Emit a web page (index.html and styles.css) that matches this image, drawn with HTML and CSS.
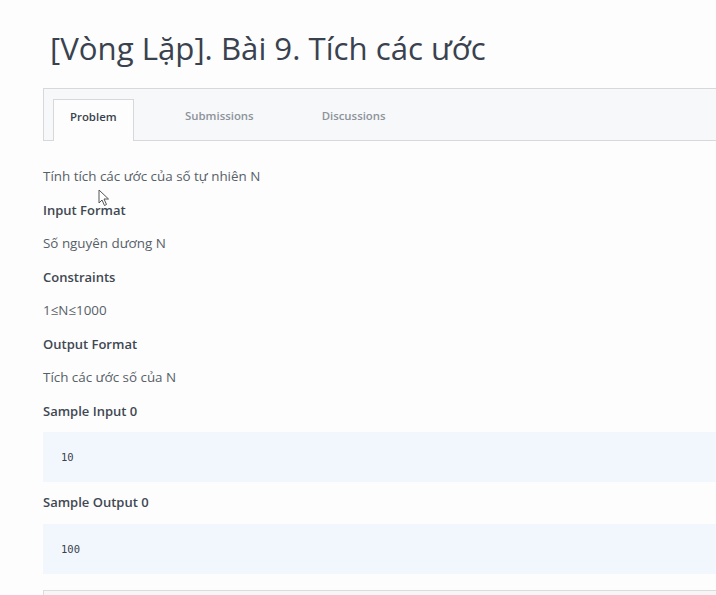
FILE: index.html
```html
<!DOCTYPE html>
<html lang="vi">
<head>
<meta charset="utf-8">
<link rel="stylesheet" href="styles.css">
</head>
<body>
<div class="page">
  <h1 class="title">[Vòng Lặp]. Bài 9. Tích các ước</h1>
  <div class="tabs">
    <div class="tab active">Problem</div>
    <div class="tab">Submissions</div>
    <div class="tab">Discussions</div>
  </div>
  <div class="content">
    <p class="text">Tính tích các ước của số tự nhiên N</p>
    <p class="heading">Input Format</p>
    <p class="text">Số nguyên dương N</p>
    <p class="heading">Constraints</p>
    <p class="text">1≤N≤1000</p>
    <p class="heading">Output Format</p>
    <p class="text">Tích các ước số của N</p>
    <p class="heading">Sample Input 0</p>
    <pre class="code">10</pre>
    <p class="heading">Sample Output 0</p>
    <pre class="code">100</pre>
    <div class="panel"></div>
  </div>
  <svg class="cursor" width="12" height="18" viewBox="0 0 12 18"><path d="M1 1 L1 14 L4 11 L6.5 16.5 L8.5 15.5 L6 10 L10.5 10 Z" fill="#fff" stroke="#555" stroke-width="1"/></svg>
</div>
</body>
</html>
```
FILE: styles.css
```css
html, body {
  margin: 0;
  padding: 0;
  background: #fdfdfd;
}
body {
  font-family: "Open Sans", "Liberation Sans", sans-serif;
  color: #39424e;
  overflow: hidden;
}
.page {
  position: relative;
  padding-left: 43px;
}
.title {
  margin: 0;
  padding: 26px 0 0 7px;
  font-size: 31.2px;
  font-weight: 400;
  line-height: 44px;
  color: #39424e;
  letter-spacing: 0;
}
.tabs {
  margin-top: 18px;
  height: 51px;
  border: 1px solid #d6d8db;
  border-right: none;
  background: #f7f8f9;
  display: flex;
  align-items: flex-end;
  padding-left: 9px;
}
.tab {
  font-size: 11.4px;
  font-weight: 600;
  color: #8c939b;
  height: 42px;
  line-height: 34px;
  padding: 0 17px 0 16px;
  margin-right: 36px;
  margin-bottom: -1px;
  box-sizing: border-box;
}
.tab.active {
  background: #fdfdfd;
  border: 1px solid #d6d8db;
  border-bottom: none;
  color: #39424e;
  width: 81px;
  padding: 0 0 0 16px;
  margin-right: 35px;
}
.tab:nth-child(2) {
  margin-right: 35px;
}
.content {
  padding-top: 19px;
}
.text, .heading {
  margin: 0;
  font-size: 13.4px;
  line-height: 33.5px;
  color: #576068;
}
.heading {
  font-size: 13px;
  font-weight: 600;
  color: #3f4852;
}
.code {
  margin: 4px 0 4px 0;
  height: 50px;
  line-height: 50px;
  padding: 0 0 0 18px;
  background: #f1f7fc;
  font-family: "DejaVu Sans Mono", monospace;
  font-size: 10.5px;
  color: #39424e;
}
.panel {
  margin-top: 16px;
  height: 30px;
  border: 1px solid #dcdcdc;
  border-right: none;
  background: #f6f6f6;
}
.cursor {
  position: absolute;
  left: 98px;
  top: 189px;
}
```
